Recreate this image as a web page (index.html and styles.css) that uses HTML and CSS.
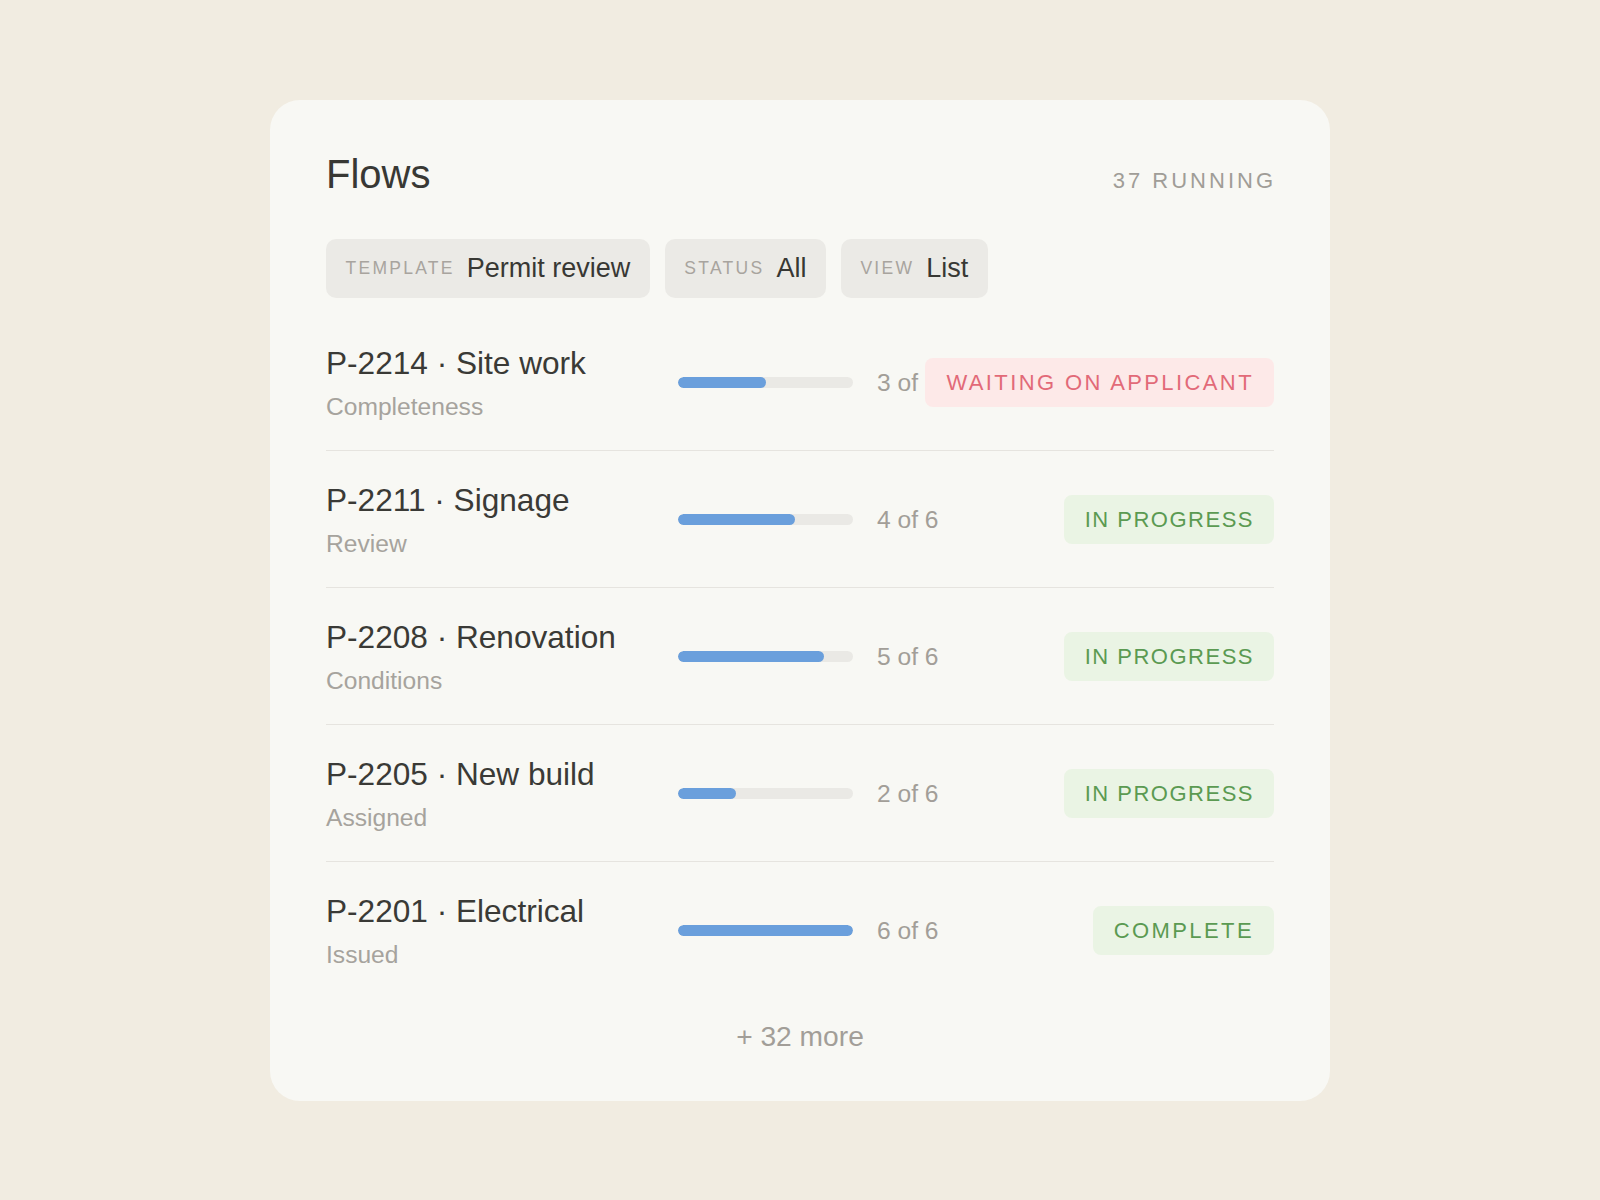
FILE: index.html
```html
<!DOCTYPE html>
<html lang="en">
<head>
<meta charset="utf-8">
<title>Flows</title>
<link rel="stylesheet" href="styles.css">
</head>
<body>
<main class="card">
  <header class="card-head">
    <h1 class="title">Flows</h1>
    <span class="running">37 RUNNING</span>
  </header>
  <div class="filters">
    <div class="chip"><span class="chip-label">TEMPLATE</span><span class="chip-value">Permit review</span></div>
    <div class="chip"><span class="chip-label">STATUS</span><span class="chip-value">All</span></div>
    <div class="chip"><span class="chip-label">VIEW</span><span class="chip-value">List</span></div>
  </div>
  <ul class="flows">
    <li class="flow">
      <div class="flow-info"><div class="flow-name">P-2214 · Site work</div><div class="flow-step">Completeness</div></div>
      <div class="bar"><div class="bar-fill" style="width:50%"></div></div>
      <div class="count">3 of 6</div>
      <span class="badge badge-wait">WAITING ON APPLICANT</span>
    </li>
    <li class="flow">
      <div class="flow-info"><div class="flow-name">P-2211 · Signage</div><div class="flow-step">Review</div></div>
      <div class="bar"><div class="bar-fill" style="width:66.67%"></div></div>
      <div class="count">4 of 6</div>
      <span class="badge badge-ok">IN PROGRESS</span>
    </li>
    <li class="flow">
      <div class="flow-info"><div class="flow-name">P-2208 · Renovation</div><div class="flow-step">Conditions</div></div>
      <div class="bar"><div class="bar-fill" style="width:83.33%"></div></div>
      <div class="count">5 of 6</div>
      <span class="badge badge-ok">IN PROGRESS</span>
    </li>
    <li class="flow">
      <div class="flow-info"><div class="flow-name">P-2205 · New build</div><div class="flow-step">Assigned</div></div>
      <div class="bar"><div class="bar-fill" style="width:33.33%"></div></div>
      <div class="count">2 of 6</div>
      <span class="badge badge-ok">IN PROGRESS</span>
    </li>
    <li class="flow">
      <div class="flow-info"><div class="flow-name">P-2201 · Electrical</div><div class="flow-step">Issued</div></div>
      <div class="bar"><div class="bar-fill" style="width:100%"></div></div>
      <div class="count">6 of 6</div>
      <span class="badge badge-ok badge-done">COMPLETE</span>
    </li>
  </ul>
  <div class="more">+ 32 more</div>
</main>
</body>
</html>
```
FILE: styles.css
```css
html, body {
  margin: 0;
  padding: 0;
}
body {
  background: #f1ece1;
  font-family: "Liberation Sans", Arial, sans-serif;
  color: #3a3a36;
}
.card {
  box-sizing: border-box;
  width: 1060px;
  margin: 100px auto 0;
  padding: 55px 56px 48px;
  background: #f8f8f4;
  border-radius: 30px;
}
.card-head {
  display: flex;
  justify-content: space-between;
  align-items: baseline;
}
.title {
  margin: 0;
  font-size: 40px;
  line-height: 39px;
  font-weight: 400;
  color: #383834;
}
.running {
  font-size: 22px;
  letter-spacing: 3px;
  color: #a09d97;
  margin-right: -2px;
}
.filters {
  display: flex;
  gap: 15px;
  margin-top: 45px;
  margin-bottom: 16px;
}
.chip {
  display: flex;
  align-items: center;
  padding: 13px 19.5px;
  background: #ebeae6;
  border-radius: 10px;
}
.chip-label {
  font-size: 17.5px;
  letter-spacing: 0.13em;
  color: #a8a49e;
  margin-right: 12px;
}
.chip-value {
  font-size: 27px;
  line-height: 33px;
  color: #383834;
}
.flows {
  list-style: none;
  margin: 0;
  padding: 0;
}
.flow {
  display: grid;
  grid-template-columns: 352px 175px 24px minmax(0, 1fr) auto;
  align-items: center;
  padding: 29px 0 28px;
  border-bottom: 1px solid #e6e4df;
}
.flow:last-child {
  border-bottom: none;
}
.flow-info {
  display: flex;
  flex-direction: column;
  gap: 9px;
}
.flow-name {
  font-size: 31.6px;
  line-height: 40px;
  color: #3a3a36;
  white-space: nowrap;
}
.flow-step {
  font-size: 24.6px;
  line-height: 30px;
  color: #a6a39d;
}
.bar {
  grid-column: 2;
  height: 11px;
  border-radius: 6px;
  background: #eae9e5;
  overflow: hidden;
}
.bar-fill {
  height: 100%;
  border-radius: 6px;
  background: #6a9fdc;
}
.count {
  grid-column: 4;
  font-size: 24.6px;
  color: #a29e98;
  white-space: nowrap;
  padding-top: 1px;
}
.badge {
  grid-column: 5;
  justify-self: end;
  font-size: 22px;
  line-height: 25px;
  letter-spacing: 1.5px;
  padding: 12px 20px 12px 21px;
  border-radius: 8px;
  white-space: nowrap;
}
.badge-ok {
  background: #eaf4e4;
  color: #5b9a52;
}
.badge-done {
  letter-spacing: 2.4px;
}
.badge-wait {
  background: #fde9e8;
  color: #e26a78;
  letter-spacing: 2.4px;
}
.more {
  text-align: center;
  padding-top: 21px;
  font-size: 28.2px;
  line-height: 34px;
  color: #a29e98;
}
```
